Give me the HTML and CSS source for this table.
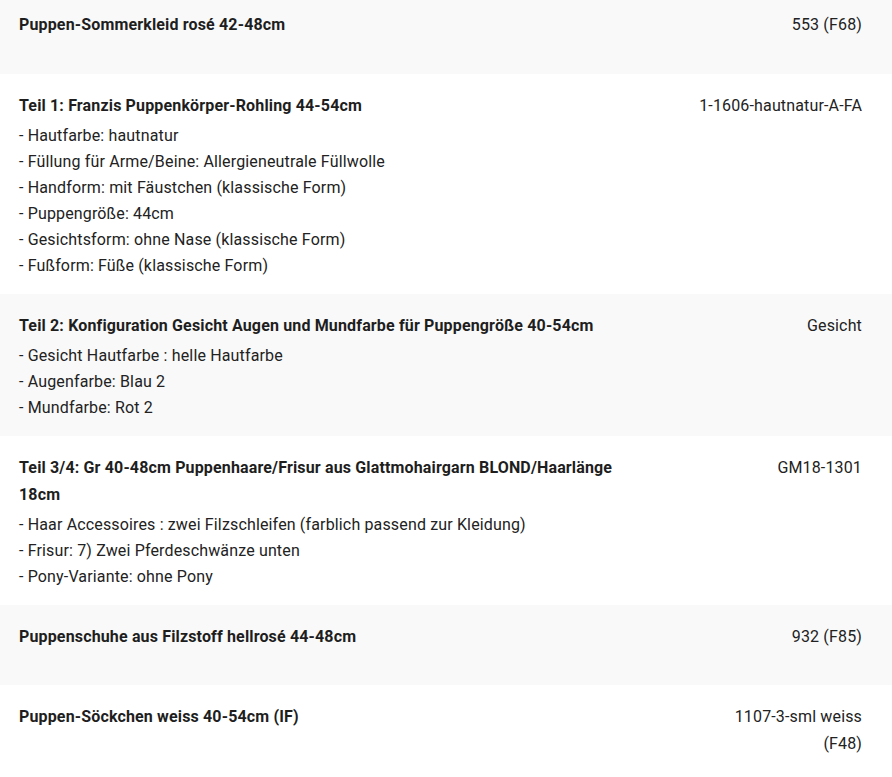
FILE: index.html
```html
<!DOCTYPE html>
<html lang="de">
<head>
<meta charset="utf-8">
<title>Puppen Konfiguration</title>
<link rel="stylesheet" href="styles.css">
</head>
<body>
<div class="table">
  <div class="row alt">
    <div class="main"><div class="title">Puppen-Sommerkleid rosé 42-48cm</div></div>
    <div class="code">553 (F68)</div>
  </div>
  <div class="row">
    <div class="main">
      <div class="title">Teil 1: Franzis Puppenkörper-Rohling 44-54cm</div>
      <ul class="opts">
        <li>- Hautfarbe: hautnatur</li>
        <li>- Füllung für Arme/Beine: Allergieneutrale Füllwolle</li>
        <li>- Handform: mit Fäustchen (klassische Form)</li>
        <li>- Puppengröße: 44cm</li>
        <li>- Gesichtsform: ohne Nase (klassische Form)</li>
        <li>- Fußform: Füße (klassische Form)</li>
      </ul>
    </div>
    <div class="code">1-1606-hautnatur-A-FA</div>
  </div>
  <div class="row alt">
    <div class="main">
      <div class="title">Teil 2: Konfiguration Gesicht Augen und Mundfarbe für Puppengröße 40-54cm</div>
      <ul class="opts">
        <li>- Gesicht Hautfarbe : helle Hautfarbe</li>
        <li>- Augenfarbe: Blau 2</li>
        <li>- Mundfarbe: Rot 2</li>
      </ul>
    </div>
    <div class="code">Gesicht</div>
  </div>
  <div class="row">
    <div class="main">
      <div class="title">Teil 3/4: Gr 40-48cm Puppenhaare/Frisur aus Glattmohairgarn BLOND/Haarlänge 18cm</div>
      <ul class="opts">
        <li>- Haar Accessoires : zwei Filzschleifen (farblich passend zur Kleidung)</li>
        <li>- Frisur: 7) Zwei Pferdeschwänze unten</li>
        <li>- Pony-Variante: ohne Pony</li>
      </ul>
    </div>
    <div class="code">GM18-1301</div>
  </div>
  <div class="row alt">
    <div class="main"><div class="title">Puppenschuhe aus Filzstoff hellrosé 44-48cm</div></div>
    <div class="code">932 (F85)</div>
  </div>
  <div class="row">
    <div class="main"><div class="title">Puppen-Söckchen weiss 40-54cm (IF)</div></div>
    <div class="code">1107-3-sml weiss (F48)</div>
  </div>
</div>
</body>
</html>
```
FILE: styles.css
```css
html, body {
  margin: 0;
  padding: 0;
  background: #ffffff;
}
body {
  font-family: Roboto, "Liberation Sans", Arial, sans-serif;
  font-size: 16px;
  letter-spacing: 0.15px;
  color: #222222;
  overflow: hidden;
}
.table {
  margin-top: -7px;
}
.row {
  display: grid;
  grid-template-columns: minmax(0, 1fr) 165px;
  column-gap: 58px;
  padding: 18px 30px 15px 19px;
  min-height: 80px;
  box-sizing: border-box;
}
.row.alt {
  background: #f9f9f9;
}
.row:first-child {
  min-height: 81px;
}
.title {
  font-weight: 700;
  line-height: 27px;
  color: #1e1e1e;
}
.opts {
  list-style: none;
  margin: 4px 0 0 0;
  padding: 0;
  line-height: 26px;
}
.code {
  text-align: right;
  line-height: 27px;
}
```
